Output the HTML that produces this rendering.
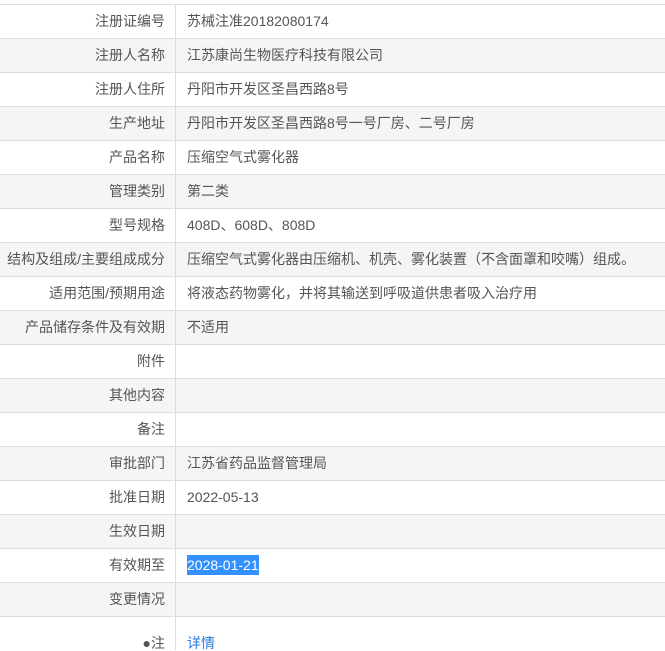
<!DOCTYPE html>
<html><head><meta charset="utf-8"><style>
body{margin:0;background:#fff;width:665px;height:632px;overflow:hidden;font-family:"Liberation Sans","Noto Sans CJK SC",sans-serif;font-size:14px;color:#555}
table{position:absolute;top:4px;left:0;width:665px;border-collapse:collapse}
td{height:33px;border-top:1px solid #ddd;padding:0;line-height:33px;white-space:nowrap}
tr:nth-child(even) td{background:#f5f5f5}
td.l{width:165px;text-align:right;padding-right:10px;border-right:1px solid #ddd}
td.v{padding-left:11px}
.sel{background:#3390ff;color:#fff;padding:2px 0}
a{color:#2a7ae2;text-decoration:none}
tr.last span{position:relative;top:10px}
</style></head><body>
<table>
<tr><td class="l">注册证编号</td><td class="v">苏械注准20182080174</td></tr>
<tr><td class="l">注册人名称</td><td class="v">江苏康尚生物医疗科技有限公司</td></tr>
<tr><td class="l">注册人住所</td><td class="v">丹阳市开发区圣昌西路8号</td></tr>
<tr><td class="l">生产地址</td><td class="v">丹阳市开发区圣昌西路8号一号厂房、二号厂房</td></tr>
<tr><td class="l">产品名称</td><td class="v">压缩空气式雾化器</td></tr>
<tr><td class="l">管理类别</td><td class="v">第二类</td></tr>
<tr><td class="l">型号规格</td><td class="v">408D、608D、808D</td></tr>
<tr><td class="l">结构及组成/主要组成成分</td><td class="v">压缩空气式雾化器由压缩机、机壳、雾化装置（不含面罩和咬嘴）组成。</td></tr>
<tr><td class="l">适用范围/预期用途</td><td class="v">将液态药物雾化，并将其输送到呼吸道供患者吸入治疗用</td></tr>
<tr><td class="l">产品储存条件及有效期</td><td class="v">不适用</td></tr>
<tr><td class="l">附件</td><td class="v"></td></tr>
<tr><td class="l">其他内容</td><td class="v"></td></tr>
<tr><td class="l">备注</td><td class="v"></td></tr>
<tr><td class="l">审批部门</td><td class="v">江苏省药品监督管理局</td></tr>
<tr><td class="l">批准日期</td><td class="v">2022-05-13</td></tr>
<tr><td class="l">生效日期</td><td class="v"></td></tr>
<tr><td class="l">有效期至</td><td class="v"><span class="sel">2028-01-21</span></td></tr>
<tr><td class="l">变更情况</td><td class="v"></td></tr>
<tr class="last"><td class="l"><span>●注</span></td><td class="v"><span><a>详情</a></span></td></tr>
</table>
</body></html>
